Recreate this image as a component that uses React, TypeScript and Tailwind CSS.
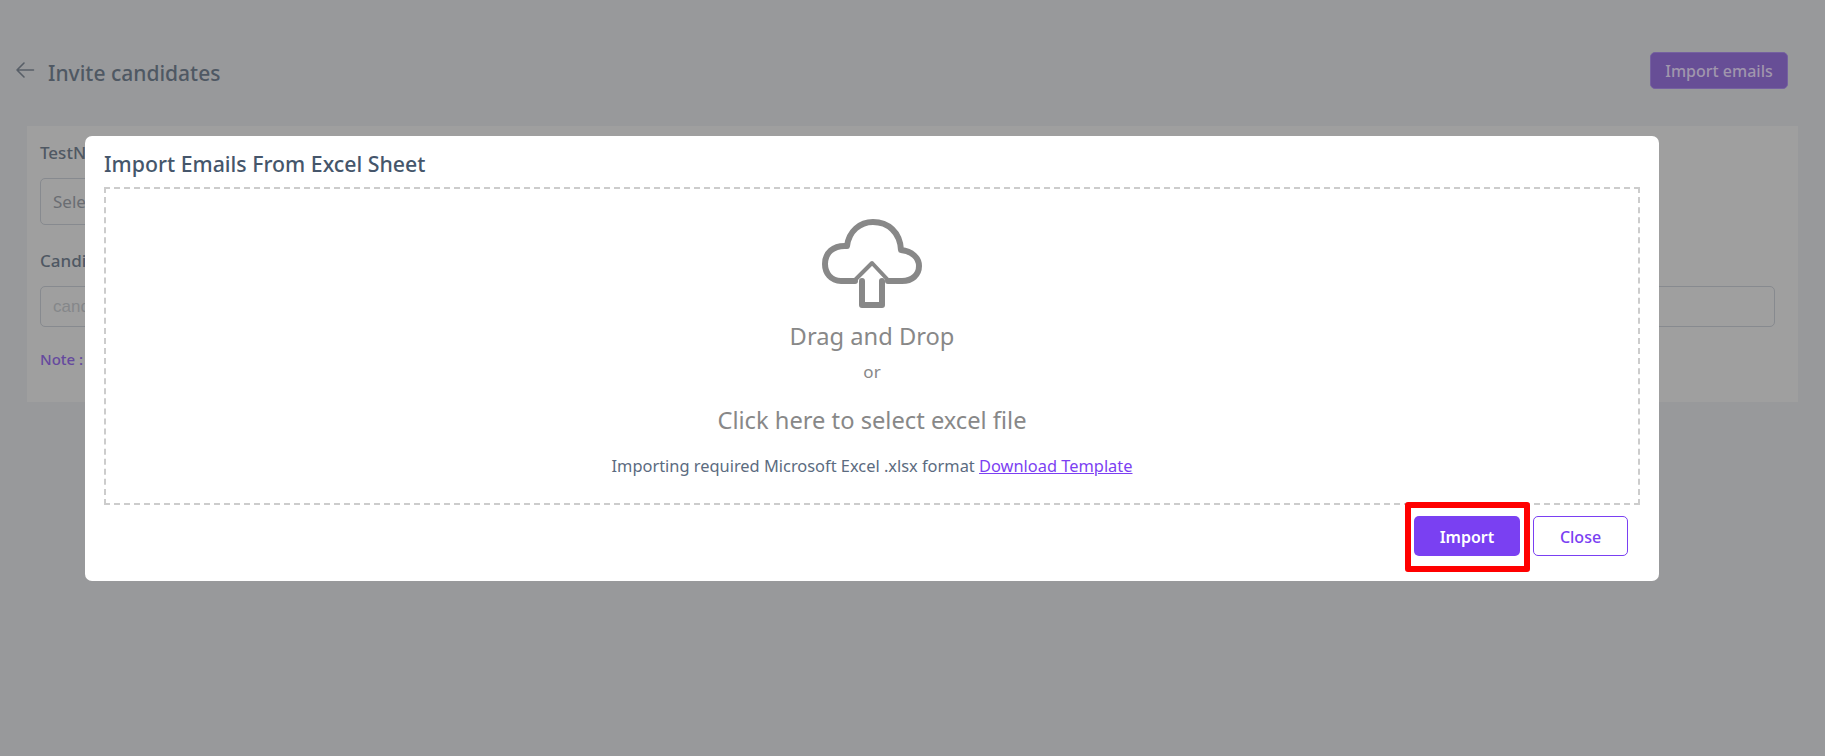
import React from "react";

const font = { fontFamily: '"Noto Sans", sans-serif' };

function CloudIcon() {
  return (
    <svg width="100" height="90" viewBox="0 0 100 90" fill="none" stroke="#888888" strokeLinejoin="round" strokeLinecap="round">
      <path strokeWidth="6" d="M33 62 H19 C9 62 3 54 3 45 C3 34 11 26 25 27 C27 12 38 3 51 3 C66 3 78 13 79 31 C90 32 97 39 97 47 C97 56 90 62 80 62 H66" />
      <path strokeWidth="4" d="M33 61 L50 44 L66 61" />
      <path strokeWidth="6" d="M40 62 V86 H60 V62" />
    </svg>
  );
}

export default function App() {
  return (
    <div className="relative h-[756px] w-full overflow-hidden bg-[#98999b]" style={font}>
      <header className="flex h-[126px] items-start justify-between pl-[15px] pr-[37px] pt-[52px]">
        <div className="flex items-center gap-[13px] pt-[6px]">
          <svg width="20" height="20" viewBox="0 0 20 20" fill="none" stroke="#585f68" strokeWidth="1.6" strokeLinecap="round" strokeLinejoin="round" className="-mt-[6px]">
            <path d="M18.5 10 H2 M9 3 L2 10 L9 17" />
          </svg>
          <h1 className="text-[21px] font-medium leading-[30px] text-[#4f5863]">Invite candidates</h1>
        </div>
        <button className="h-[37px] w-[138px] rounded-[5px] border border-[#7561a0] bg-[#674e96] text-[16px] font-medium text-[#a096ad]">
          Import emails
        </button>
      </header>

      <section className="mx-[27px] h-[276px] bg-[#9f9f9f] pl-[13px] pr-[23px] pt-[15px]">
        <label className="block text-[17px] font-medium leading-[24px] text-[#4f5863]">TestName</label>
        <div className="mt-[13px] flex h-[47px] w-[600px] items-center rounded-[5px] border border-[#878a8f] px-[12px] text-[17px] text-[#6a6d72]">
          Select
        </div>
        <label className="mt-[24px] block text-[17px] font-medium leading-[24px] text-[#4f5863]">Candidates</label>
        <div className="mt-[13px] flex h-[41px] items-center rounded-[5px] border border-[#878a8f] px-[12px] text-[17px] text-[#85878a]" style={{ fontFamily: '"Liberation Sans", sans-serif' }}>
          candidates
        </div>
        <p className="mt-[22px] text-[15px] font-medium leading-[21px] text-[#65499e]">Note :</p>
      </section>

      <div className="absolute inset-0 pl-[85px] pt-[136px]">
        <div className="h-[445px] w-[1574px] rounded-[7px] bg-white pl-[19px] pr-[19px]">
          <h2 className="pt-[13px] text-[21.3px] font-medium leading-[30px] text-[#45566b]">Import Emails From Excel Sheet</h2>
          <div className="mt-[8px] flex h-[318px] flex-col items-center border-2 border-dashed border-[#cccccc] pt-[30px]">
            <CloudIcon />
            <p className="mt-[9px] text-[23.7px] leading-[36px] text-[#888888]">Drag and Drop</p>
            <p className="mt-[5px] text-[17px] leading-[26px] text-[#888888]">or</p>
            <p className="mt-[17px] text-[23.7px] leading-[36px] text-[#888888]">Click here to select excel file</p>
            <p className="mt-[16px] text-[16.4px] leading-[24px] text-[#5b6b80]">
              Importing required Microsoft Excel .xlsx format{" "}
              <a className="text-[#7c3ff2] underline" href="#">Download Template</a>
            </p>
          </div>
          <div className="mt-[11px] flex justify-end gap-[13px] pr-[12px]">
            <div className="relative">
              <button className="h-[40px] w-[106px] rounded-[5px] bg-[#7a40f2] pt-[2px] text-[16px] font-semibold text-white">Import</button>
              <div className="absolute bottom-[-16px] left-[-9px] right-[-10px] top-[-14px] rounded-[3px] border-[6px] border-[#ff0000]" />
            </div>
            <button className="h-[40px] w-[95px] rounded-[5px] border border-[#7a40f2] bg-white pt-[2px] text-[16px] font-medium text-[#7a40f2]">Close</button>
          </div>
        </div>
      </div>
    </div>
  );
}
